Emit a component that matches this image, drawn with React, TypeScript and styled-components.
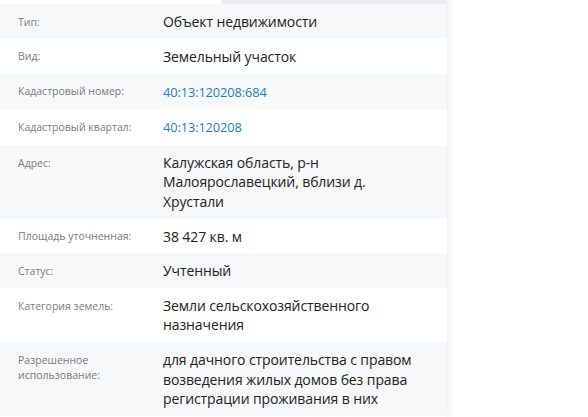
import styled, { createGlobalStyle } from "styled-components";

const GlobalStyle = createGlobalStyle`
  html, body {
    margin: 0;
    padding: 0;
    background: #ffffff;
  }
  body {
    font-family: "Open Sans", "Noto Sans", sans-serif;
    overflow: hidden;
  }
`;

const Panel = styled.div`
  width: 447px;
  height: 417px;
  background: #ffffff;
  box-shadow: 2px 0 8px rgba(0, 0, 0, 0.08);
  display: flex;
  flex-direction: column;
  overflow: hidden;
`;

const TabStrip = styled.div`
  display: flex;
  height: 4px;
  flex-shrink: 0;
`;

const Tab = styled.div<{ $active?: boolean }>`
  flex: 0 0 ${(p) => (p.$active ? "222px" : "225px")};
  background: ${(p) => (p.$active ? "#ffffff" : "#e9ecf0")};
`;

const List = styled.dl`
  margin: 0;
  display: flex;
  flex-direction: column;
`;

const Row = styled.div<{ $odd: boolean }>`
  display: flex;
  align-items: flex-start;
  padding: 8px 22px 7.5px 18px;
  background: ${(p) => (p.$odd ? "#f7f8fa" : "#ffffff")};
`;

const Label = styled.dt`
  flex: 0 0 135px;
  margin-right: 10px;
  padding-top: 2.5px;
  font-size: 10.5px;
  line-height: 15px;
  color: #7b7b7b;
`;

const Value = styled.dd`
  flex: 1;
  margin: 0;
  font-size: 14px;
  line-height: 19.3px;
  letter-spacing: -0.1px;
  color: #222222;
`;

const Link = styled.a`
  color: #1a7fc4;
  text-decoration: none;
  font-size: 12.8px;
`;

const DATA: Array<{ label: string; value: string; link?: boolean }> = [
  { label: "Тип:", value: "Объект недвижимости" },
  { label: "Вид:", value: "Земельный участок" },
  { label: "Кадастровый номер:", value: "40:13:120208:684", link: true },
  { label: "Кадастровый квартал:", value: "40:13:120208", link: true },
  {
    label: "Адрес:",
    value: "Калужская область, р-н Малоярославецкий, вблизи д. Хрустали",
  },
  { label: "Площадь уточненная:", value: "38 427 кв. м" },
  { label: "Статус:", value: "Учтенный" },
  { label: "Категория земель:", value: "Земли сельскохозяйственного назначения" },
  {
    label: "Разрешенное использование:",
    value:
      "для дачного строительства с правом возведения жилых домов без права регистрации проживания в них",
  },
];

const App = () => {
  return (
    <>
      <GlobalStyle />
      <Panel>
        <TabStrip>
          <Tab $active />
          <Tab />
        </TabStrip>
        <List>
          {DATA.map((item, i) => (
            <Row key={i} $odd={i % 2 === 0}>
              <Label>{item.label}</Label>
              <Value>
                {item.link ? <Link href="#">{item.value}</Link> : item.value}
              </Value>
            </Row>
          ))}
        </List>
      </Panel>
    </>
  );
};

export default App;
